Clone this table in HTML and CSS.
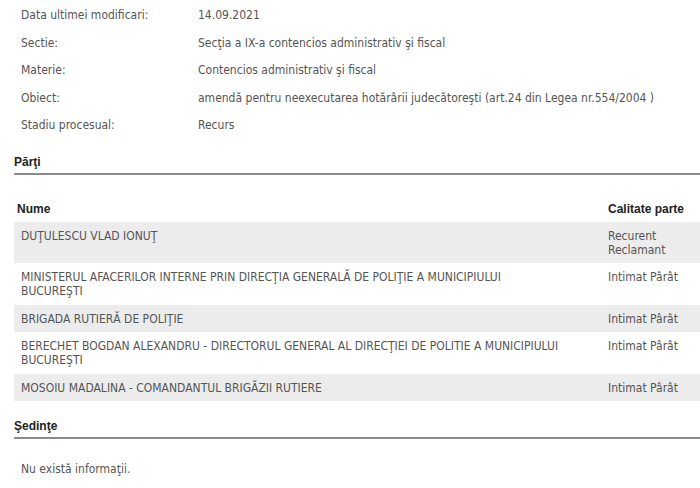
FILE: index.html
```html
<!DOCTYPE html>
<html lang="ro">
<head>
  <meta charset="UTF-8">
  <meta name="viewport" content="width=device-width, initial-scale=1.0">
  <title>Dosar</title>
  <link rel="stylesheet" href="styles.css">
</head>
<body>
  <table class="info">
    <tr><td class="label">Data ultimei modificari:</td><td>14.09.2021</td></tr>
    <tr><td class="label">Sectie:</td><td>Secţia a IX-a contencios administrativ şi fiscal</td></tr>
    <tr><td class="label">Materie:</td><td>Contencios administrativ şi fiscal</td></tr>
    <tr><td class="label">Obiect:</td><td>amendă pentru neexecutarea hotărârii judecătoreşti (art.24 din Legea nr.554/2004 )</td></tr>
    <tr><td class="label">Stadiu procesual:</td><td>Recurs</td></tr>
  </table>

  <h3 class="section-title">Părţi</h3>
  <table class="parti">
    <thead>
      <tr><th>Nume</th><th class="calitate">Calitate parte</th></tr>
    </thead>
    <tbody>
      <tr><td>DUŢULESCU VLAD IONUŢ</td><td class="calitate">Recurent Reclamant</td></tr>
      <tr><td>MINISTERUL AFACERILOR INTERNE PRIN DIRECŢIA GENERALĂ DE POLIŢIE A MUNICIPIULUI<br>BUCUREŞTI</td><td class="calitate">Intimat Pârât</td></tr>
      <tr><td>BRIGADA RUTIERĂ DE POLIŢIE</td><td class="calitate">Intimat Pârât</td></tr>
      <tr><td>BERECHET BOGDAN ALEXANDRU - DIRECTORUL GENERAL AL DIRECŢIEI DE POLITIE A MUNICIPIULUI BUCUREŞTI</td><td class="calitate">Intimat Pârât</td></tr>
      <tr><td>MOSOIU MADALINA - COMANDANTUL BRIGĂZII RUTIERE</td><td class="calitate">Intimat Pârât</td></tr>
    </tbody>
  </table>

  <h3 class="section-title sedinte">Şedinţe</h3>
  <p class="empty">Nu există informaţii.</p>
</body>
</html>
```

FILE: styles.css
```css
body {
    margin: 0;
    padding: 1px 0 0 14px;
    background-color: #fff;
    font-family: "DejaVu Sans Condensed", "Liberation Sans", sans-serif;
    font-size: 12px;
    color: #555;
    overflow: hidden;
}

table {
    border-collapse: collapse;
}

.info td {
    padding: 7px 7px 6.5px 7px;
    line-height: 14px;
    vertical-align: top;
}

.info .label {
    width: 163px;
}

.section-title {
    margin: 16px 0 0 0;
    padding: 0 0 4px 0;
    font-family: "Liberation Sans", Arial, sans-serif;
    font-size: 12px;
    line-height: 14px;
    color: #222;
    border-bottom: 2px solid #8a8a8a;
}

.parti {
    width: 686px;
    margin-top: 19px;
}

.parti th {
    text-align: left;
    font-family: "Liberation Sans", Arial, sans-serif;
    font-size: 12px;
    color: #222;
    padding: 8px 3px 6px 3px;
    line-height: 14px;
}

.parti th.calitate {
    padding-left: 7px;
}

.parti td {
    padding: 7px 7px 6.5px 7px;
    line-height: 14px;
    vertical-align: top;
}

.parti td.calitate {
    width: 85px;
}

.parti tbody tr:nth-child(odd) {
    background-color: #ececec;
}

.sedinte {
    margin-top: 18px;
}

.empty {
    margin: 23px 0 0 7px;
    line-height: 14px;
}
```
